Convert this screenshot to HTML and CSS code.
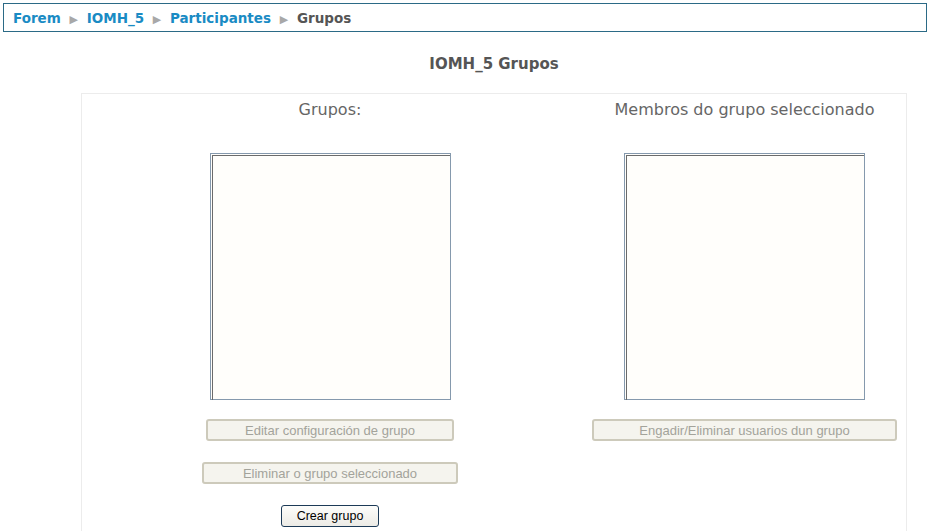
FILE: index.html
```html
<!DOCTYPE html>
<html lang="gl">
<head>
    <meta charset="UTF-8">
    <title>IOMH_5 Grupos</title>
    <link rel="stylesheet" href="styles.css">
</head>
<body>
    <div class="navbar">
        <a href="#">Forem</a> <span class="sep">&#9654;</span>
        <a href="#">IOMH_5</a> <span class="sep">&#9654;</span>
        <a href="#">Participantes</a> <span class="sep">&#9654;</span>
        <span class="current">Grupos</span>
    </div>

    <div class="content">
        <h2 class="page-title">IOMH_5 Grupos</h2>

        <div class="groups-box">
            <div class="groups-col left-col">
                <h3>Grupos:</h3>
                <div class="listbox"><div class="listbox-inner"></div></div>
                <button class="btn disabled w-edit" disabled>Editar configuración de grupo</button>
                <button class="btn disabled w-delete" disabled>Eliminar o grupo seleccionado</button>
                <button class="btn w-create">Crear grupo</button>
            </div>
            <div class="groups-col right-col">
                <h3>Membros do grupo seleccionado</h3>
                <div class="listbox"><div class="listbox-inner"></div></div>
                <button class="btn disabled w-members" disabled>Engadir/Eliminar usuarios dun grupo</button>
            </div>
        </div>
    </div>
</body>
</html>
```

FILE: styles.css
```css
body {
    margin: 0;
    padding: 3px;
    background: #fff;
    font-family: "DejaVu Sans", Verdana, sans-serif;
    color: #555;
}
.navbar {
    border: 1px solid #2b6a86;
    height: 27px;
    padding: 0 9px;
    font-size: 13.5px;
    font-weight: bold;
    line-height: 29px;
    white-space: nowrap;
}
.navbar a {
    color: #1a8bc4;
    text-decoration: none;
}
.navbar .sep {
    color: #a8a8a8;
    font-size: 11px;
    font-weight: normal;
    margin: 0 4px;
}
.navbar .current {
    color: #555;
}
.content {
    margin: 0 20px 0 78px;
}
.page-title {
    margin: 21px 0 0;
    text-align: center;
    font-size: 15px;
    font-weight: bold;
    color: #555;
    line-height: 22px;
}
.groups-box {
    margin-top: 18px;
    border: 1px solid #ececec;
    border-bottom: none;
    height: 440px;
    display: grid;
    grid-template-columns: 320px 309px;
    column-gap: 100px;
    padding-left: 88px;
}
.groups-col {
    display: flex;
    flex-direction: column;
    align-items: center;
}
.groups-col h3 {
    margin: 5px 0 0;
    font-size: 16px;
    font-weight: normal;
    color: #666;
    line-height: 22px;
    height: 54px;
}
.listbox {
    width: 238px;
    height: 244px;
    border: 1px solid #8599ad;
    padding: 1px 0 0 1px;
    background: #fffefb;
}
.listbox-inner {
    height: 100%;
    border-top: 1px solid #6b6b6b;
    border-left: 1px solid #6b6b6b;
}
.btn {
    font-family: "Liberation Sans", Arial, sans-serif;
    font-size: 12.5px;
    height: 22px;
    border-radius: 3px;
    background: linear-gradient(#fdfdfb, #ecebe6);
    border: 1px solid #1c3a57;
    color: #000;
    padding: 0;
    margin-top: 21px;
}
.listbox + .btn {
    margin-top: 19px;
}
.btn.disabled {
    font-size: 13px;
    background: #f5f4ee;
    border: 2px solid #cdcabb;
    color: #a3a39b;
}
.w-edit { width: 248px; }
.w-delete { width: 256px; }
.w-create { width: 98px; }
.w-members { width: 305px; }
```
